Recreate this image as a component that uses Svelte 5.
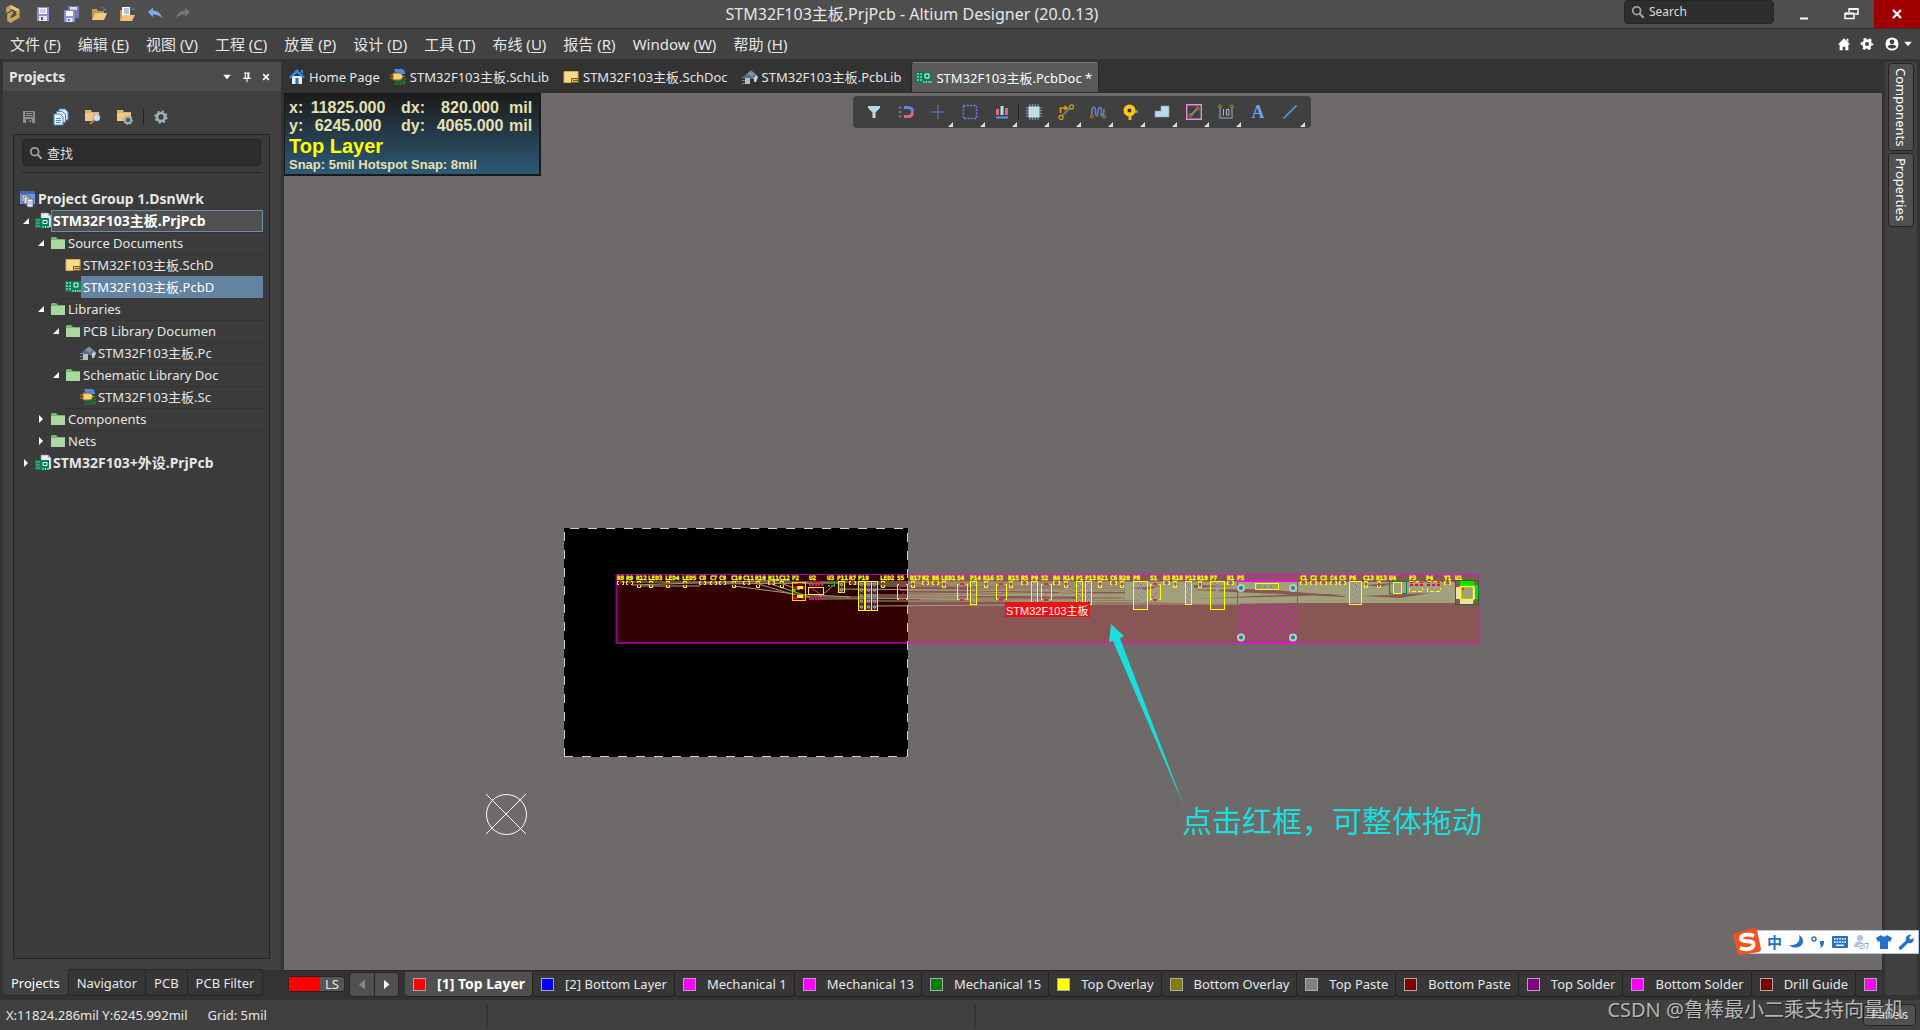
<script>
  const icons = {
    logo: '<path d="M1 2.500 5 0l8 4v7l-8 5-3-2V8l5-3v3L5 9.500V12l5-3V5.500L5 3v2L1 7z" fill="#c9a55c"/><path d="M5 0l8 4-3 1.500L5 3z" fill="#e2c685"/>',
    save: '<path d="M2 1h12v14H2z" fill="#8f8fd0"/><path d="M4 2h8v6H4z" fill="#fff"/><path d="M5 4h6M5 6h6" stroke="#9a9ac8"/><path d="M4 10h8v5H4z" fill="#e4e4f4"/><path d="M6 11h2v3H6z" fill="#55558c"/>',
    saveGray: '<path d="M2 2h12v12H2z" fill="#8d8d8d"/><path d="M4 3h8v5H4z" fill="#4b4b4b"/><path d="M5 4.500h6M5 6.500h6" stroke="#8d8d8d"/><path d="M5 10h6v4H5z" fill="#4b4b4b"/><path d="M9 11h1v2H9z" fill="#aaa"/>',
    saveAll: '<path d="M5 0h11v12H5z" fill="#7777bd"/><path d="M7 1h7v3H7z" fill="#ddd"/><path d="M1 4h11v12H1z" fill="#9696d6" stroke="#62629c" stroke-width=".5"/><path d="M3 5h7v5H3z" fill="#fff"/><path d="M3.500 12h6v4h-6z" fill="#e4e4f4"/><path d="M5 13h1.500v2H5z" fill="#55558c"/>',
    open: '<path d="M1 3h5l1 2h6v3H1z" fill="#c6984e"/><path d="M1 14V4l1 0v3l2 0z" fill="#c6984e"/><path d="M4 7h12l-3 7H1z" fill="#f2cb83"/><path d="M10 2c2-2 4 0 4 2m-2-1 2 1.500L15.500 3" stroke="#4a82b8" fill="none"/>',
    openDoc: '<path d="M1 4h3v10H1z" fill="#c6984e"/><path d="M3 1h8v9H3z" fill="#fff"/><path d="M5 3h5M5 5h5M5 7h5" stroke="#668cae"/><path d="M4 9h12l-3 6H1z" fill="#f2c272"/><path d="M12 2c2-1 3 0 3 2m-2-1 2 1.500L16 3" stroke="#4a82b8" fill="none"/>',
    undo: '<path d="M1 6 6 1.500V4.500c5 0 8 3 9 8-2-3-5-4-9-4v2.500z" fill="#7fa9ea"/>',
    redo: '<path d="M15 6 10 1.500V4.500C5 4.500 2 7.500 1 12.500c2-3 5-4 9-4v2.500z" fill="#757575"/>',
    home: '<path d="M3 7h10v8H3z" fill="#e8eef4"/><path d="M0 8.500 8 0l8 8.500-1.500 1L8 4 1.500 9.500z" fill="#2f8df0"/><path d="M12 1h2v4l-2-2z" fill="#2f8df0"/><path d="M6.500 9h3v6h-3z" fill="#2a6eb8"/>',
    schlib: '<path d="M4 0h7c3 0 4 2 4 5H6z" fill="#4a8cf0"/><path d="M8 10h6v4H5v-3z" fill="#146a2c"/><path d="M5 14v2m3-2v2m3-2v2m3-2v2M14 10h2m-2 3h2" stroke="#2a9a48"/><path d="M3 4h6c5 0 5 7 0 7H3z" fill="#f4d27a" stroke="#8c6414"/><path d="M0 6h3M0 9h3m9-1.500h3" stroke="#c08a20"/>',
    schdoc: '<path d="M1 2.500h14v11H1z" fill="#f6da8e" stroke="#d8ad50"/><path d="M8.500 9.500H15V13.500H8.500z" fill="#e5be66" stroke="#7a5a20"/><path d="M10 11.500h5" stroke="#7a5a20"/>',
    pcblib: '<path d="M2 7 9 1l6 5-3 4-4 0-3 1z" fill="#566c84"/><path d="M5 5 9 2l4 3-3 3z" fill="#7d90a4"/><path d="M3 9h5v6H3z" fill="#b3bdc7"/><path d="M0 8.500h4M0 11.500h3m-3 3h3" stroke="#7a828a" stroke-width="1.200"/><path d="M11 10l3-4 2 2-2 5h-2v-3z" fill="#c6ced6"/>',
    pcbdoc: '<path d="M0 2h16v11H0z" fill="#078058"/><path d="M1 4h2m-2 3h2m-2 3h2m1-6h2M4 7h2M4 10h2" stroke="#d8f4e8"/><path d="M9 4h4v4H9z" fill="none" stroke="#e8fff4"/><path d="M8 13v-2m2.500 2v-2m2.500 2v-2m2 2v-2" stroke="#c0f0d8"/>',
    project: '<path d="M6 0h7l3 3v11H6z" fill="#eaeaf6" stroke="#8888aa" stroke-width=".6"/><path d="M13 0v3h3" fill="#b2b2cc"/><path d="M0 5h14v10H0z" fill="#078058"/><path d="M1.500 7h4m-4 3h4m-4 3h4" stroke="#d8f4e8" stroke-dasharray="1 1"/><path d="M8 7.500h4v3H8z" fill="#075" stroke="#e8fff4"/><path d="M8 15v-2m2.500 2v-2m2.500 2v-2" stroke="#c0f0d8"/>',
    group: '<path d="M0 0h15v13H0z" fill="#7397d8"/><path d="M0 0h15v3H0z" fill="#3c68bc"/><path d="M2 4h6v7H2z" fill="#eef" stroke="#56658c"/><path d="M4 6h6v7H4z" fill="#eef" stroke="#56658c"/><path d="M7 8h6v8H7z" fill="#fff" stroke="#56658c"/><path d="M8 11h4m-4 2h4" stroke="#7d94bd"/>',
    folder: '<path d="M1 3l1-1h4l2 2h7v10H1z" fill="#7ab57a"/><path d="M1 5h14v9H1z" fill="#a9d99f"/>',
    docs: '<path d="M6 0h6l3 3v8H6z" fill="#d8ebff" stroke="#4a86c4"/><path d="M3.500 2.500h6l3 3v8h-9z" fill="#d8ebff" stroke="#4a86c4"/><path d="M1 5h6l3 3v8H1z" fill="#eef7ff" stroke="#4a86c4"/><path d="M3 9.500h5m-5 2h5m-5 2h5" stroke="#4a86c4"/>',
    folderFind: '<path d="M0 1h6l1 2h7v9H0z" fill="#dcb46c"/><path d="M0 4h14v8H0z" fill="#f0c981"/><circle cx="11.500" cy="8.500" r="3.500" fill="#c8e0ee" stroke="#96b0c0"/><path d="m9 11-4 4" stroke="#c77c30" stroke-width="2"/>',
    folderGear: '<path d="M0 1h6l1 2h7v9H0z" fill="#dcb46c"/><path d="M0 4h14v8H0z" fill="#f0c981"/><circle cx="11" cy="11" r="3.300" fill="#555" stroke="#a4b4bc" stroke-width="2"/><circle cx="11" cy="11" r="4.800" fill="none" stroke="#a4b4bc" stroke-dasharray="1.500 2.200"/>',
    gearBlue: '<circle cx="8" cy="8" r="4" fill="none" stroke="#9fb2bd" stroke-width="2.600"/><circle cx="8" cy="8" r="5.800" fill="none" stroke="#9fb2bd" stroke-width="1.600" stroke-dasharray="2.300 2.250"/>',
    search: '<circle cx="6.500" cy="6.500" r="4.500" fill="none" stroke="#a0a0a0" stroke-width="2"/><path d="m10 10 4.500 4.500" stroke="#a0a0a0" stroke-width="2.600"/>',
    menu: '<path d="M3 5h10l-5 6z" fill="#fff"/>',
    pin: '<path d="M4 2h8v1h-1v6h2v1.500H8.700V15H7.300v-4.500H3V9h2V3H4zM6.500 3.200V9h2V3.200z" fill="#fff" fill-rule="evenodd"/>',
    close: '<path d="m3.500 3.500 9 9m0-9-9 9" stroke="#fff" stroke-width="2.600"/>',
    min: '<path d="M4 11.500h8v2H4z" fill="#fff"/>',
    restore: '<path d="M6 6V3h9v5h-3M2 7.500h9v5H2z" fill="none" stroke="#fff" stroke-width="1.500"/><path d="M6 3h9M2 7.500h9" stroke="#fff" stroke-width="2"/>',
    house: '<path d="M8 1.500 15 8.500h-2V15h-3.500v-4h-3v4H3V8.500H1zM11 2h2v4l-2-2z" fill="#fff"/>',
    gear: '<circle cx="8" cy="8" r="3.900" fill="none" stroke="#fff" stroke-width="3.200"/><circle cx="8" cy="8" r="6.200" fill="none" stroke="#fff" stroke-width="2" stroke-dasharray="3.200 3.290" stroke-dashoffset="1.600"/>',
    user: '<circle cx="8" cy="8" r="7.500" fill="#fff"/><circle cx="8" cy="5.500" r="2.700" fill="#404040"/><path d="M3 11c1-3 9-3 10 0-2 3-8 3-10 0z" fill="#404040"/>',
    filter: '<path d="M2 2h12v2l-4.500 4.500V14h-3V8.500L2 4z" fill="#b7d8ea"/>',
    magnet: '<path d="M6 3.500h4q4.500 0 4.500 4.500" stroke="#6488dd" stroke-width="3" fill="none"/><path d="M14.500 8q0 4.500-4.500 4.500H6" stroke="#d56a76" stroke-width="3" fill="none"/><path d="M1 3.500h3M1 8h3m-3 4.500h3" stroke="#6f8799" stroke-width="2" stroke-dasharray="1.500 1"/>',
    cross: '<path d="M8 1v14M1 8h14" stroke="#587fd0"/>',
    select: '<path d="M1.500 1.500h13v13h-13z" fill="none" stroke="#6685e6" stroke-width="1.400" stroke-dasharray="2 1.300"/>',
    align: '<path d="M2 5h3v6H2zM11 4h3v7h-3z" fill="#d86d78"/><path d="M6.500 2h3v9h-3z" fill="#b8dced"/><path d="M2 12.500h12v2H2z" fill="#6292da"/>',
    chip: '<path d="M4 0v16M6.700 0v16M9.300 0v16M12 0v16M0 4h16M0 6.700h16M0 9.300h16M0 12h16" stroke="#7e93a5" stroke-width="1.200"/><path d="M2.500 2.500h11v11h-11z" fill="#c4dcea"/>',
    route: '<path d="M2.500 9V4h5" fill="none" stroke="#d69a12" stroke-width="1.700"/><path d="m6.500 1 4 3-4 3z" fill="#d69a12"/><path d="m4 12 8-8" stroke="#6b7784" stroke-width="2.200"/><circle cx="3" cy="13.500" r="2" fill="#3d3d3d" stroke="#d69a12" stroke-width="1.300"/><circle cx="13.500" cy="3" r="2" fill="#3d3d3d" stroke="#d69a12" stroke-width="1.300"/>',
    wave: '<path d="M2 11C1 3 4 2 5 4s0 8 1.500 8S8 9 8 7s2-5 3-3-.5 8 1 8 2-5 2-7" fill="none" stroke="#5c83ce" stroke-width="1.600"/><circle cx="1.800" cy="12.500" r="1.500" fill="#3d3d3d" stroke="#c98a20"/><circle cx="14.200" cy="12.500" r="1.500" fill="#3d3d3d" stroke="#c98a20"/>',
    pad: '<path d="M9 6h7v3H9z" fill="#59a83c"/><path d="M6.500 9h3v7h-3z" fill="#ffab3c"/><circle cx="7.500" cy="6.500" r="4" fill="#333" stroke="#fbc816" stroke-width="4"/>',
    poly: '<path d="M1 7h6V2h8v11H1z" fill="#b9dcec" stroke="#83a8bd" stroke-width=".6"/>',
    room: '<path d="M.7.700h14.600v14.600H.7z" fill="none" stroke="#e78cdc" stroke-width="1.400"/><path d="m5 11 6-6" stroke="#6d87a5" stroke-width="2"/><circle cx="4.500" cy="11.500" r="1.500" fill="#444" stroke="#d69a12"/><circle cx="11.500" cy="4.500" r="1.500" fill="#444" stroke="#d69a12"/>',
    dim: '<path d="M2 4v10h12V4" fill="none" stroke="#74899b" stroke-width="1.500"/><circle cx="2" cy="2.500" r="1.500" fill="#444" stroke="#c98a20"/><circle cx="14" cy="2.500" r="1.500" fill="#444" stroke="#c98a20"/><path d="M5.500 5v6.500M8.500 5.500h2.500v5.500H8.500z" fill="none" stroke="#a9b8c4"/>',
    text: '<text x="8" y="14" text-anchor="middle" font-family="Liberation Serif, serif" font-weight="700" font-size="18" fill="#6b9ff0">A</text>',
    line: '<path d="M1.500 14.500 14.500 1.500" stroke="#4d8ed6" stroke-width="1.800"/>',
    moon: '<path d="M11 1c2 6-2 11-10 10 6 5 14 2 14-4 0-3-2-5-4-6z" fill="#2272cb"/>',
    comma: '<circle cx="4" cy="5" r="2" fill="none" stroke="#2272cb" stroke-width="1.400"/><path d="M10 7h4c0 4-1 6-4 7 1-2 1-3 0-4z" fill="#2272cb"/>',
    keyboard: '<path d="M1 2h14q1 0 1 1v10q0 1-1 1H1q-1 0-1-1V3q0-1 1-1z" fill="#2272cb"/><path d="M2 5h12M2 8h12" stroke="#fff" stroke-width="1.500" stroke-dasharray="1.700 .9"/><path d="M4 11.300h8" stroke="#fff" stroke-width="1.500"/>',
    person: '<circle cx="6" cy="4" r="3" fill="#b5c2dc"/><path d="M0 13c0-7 10-7 11-3v4z" fill="#b5c2dc"/><path d="M6 9.500h3V12H6v2.500h3m2-5h3.500L12.500 15" fill="none" stroke="#fff" stroke-width="2.600"/><path d="M6 9.500h3V12H6v2.500h3m2-5h3.500L12.500 15" fill="none" stroke="#93a5c8"/>',
    shirt: '<path d="M5 1c1 2 5 2 6 0l5 3-2 4-2-1v8H4V7L2 8 0 4z" fill="#2272cb"/>',
    wrench: '<path d="M1 13 8 6.500C7 3 10 0 13.500 1L11 3.500l1.500 2L15.500 4C16.500 8 13 10 10 9l-6.500 6.500Q0 16 1 13z" fill="#2272cb"/>'
  };

  const menus = [
    ['文件', 'F'], ['编辑', 'E'], ['视图', 'V'], ['工程', 'C'], ['放置', 'P'], ['设计', 'D'],
    ['工具', 'T'], ['布线', 'U'], ['报告', 'R'], ['Window', 'W'], ['帮助', 'H']
  ];
  const quick = [['save', 'Save'], ['saveAll', 'Save all'], ['open', 'Open'], ['openDoc', 'Open document'], ['undo', 'Undo'], ['redo', 'Redo']];
  const docs = [
    ['home', 'Home Page'], ['schlib', 'STM32F103主板.SchLib'], ['schdoc', 'STM32F103主板.SchDoc'],
    ['pcblib', 'STM32F103主板.PcbLib'], ['pcbdoc', 'STM32F103主板.PcbDoc *']
  ];
  const tree = [
    { lv: 0, icon: 'group', text: 'Project Group 1.DsnWrk', bold: true },
    { lv: 1, icon: 'project', text: 'STM32F103主板.PrjPcb', bold: true, open: true, focus: true },
    { lv: 2, icon: 'folder', text: 'Source Documents', open: true },
    { lv: 3, icon: 'schdoc', text: 'STM32F103主板.SchD' },
    { lv: 3, icon: 'pcbdoc', text: 'STM32F103主板.PcbD', selected: true },
    { lv: 2, icon: 'folder', text: 'Libraries', open: true },
    { lv: 3, icon: 'folder', text: 'PCB Library Documen', open: true },
    { lv: 4, icon: 'pcblib', text: 'STM32F103主板.Pc' },
    { lv: 3, icon: 'folder', text: 'Schematic Library Doc', open: true },
    { lv: 4, icon: 'schlib', text: 'STM32F103主板.Sc' },
    { lv: 2, icon: 'folder', text: 'Components', open: false },
    { lv: 2, icon: 'folder', text: 'Nets', open: false },
    { lv: 1, icon: 'project', text: 'STM32F103+外设.PrjPcb', bold: true, open: false }
  ];
  const tools = [
    ['filter', 0], ['magnet', 0], ['cross', 1], ['select', 1], ['align', 1], ['chip', 1], ['route', 1],
    ['wave', 1], ['pad', 1], ['poly', 1], ['room', 1], ['dim', 1], ['text', 0], ['line', 1]
  ];
  const layers = [
    ['#ff0000', '[1] Top Layer'], ['#0000ff', '[2] Bottom Layer'], ['#ff00ff', 'Mechanical 1'], ['#ff00ff', 'Mechanical 13'],
    ['#008000', 'Mechanical 15'], ['#ffff00', 'Top Overlay'], ['#808000', 'Bottom Overlay'], ['#808080', 'Top Paste'],
    ['#800000', 'Bottom Paste'], ['#800080', 'Top Solder'], ['#ff00ff', 'Bottom Solder'], ['#800000', 'Drill Guide'], ['#ff00ff', '']
  ];
  const panels = ['Projects', 'Navigator', 'PCB', 'PCB Filter'];

  // Designators: x, name, outline (h = flat, v = upright, '' = drawn separately)
  const parts = [
    [617, 'R8', 'h'], [626, 'R9', 'h'], [636, 'R12', 'v'], [648, 'LED3', 'v'], [665, 'LED4', 'v'], [682, 'LED5', 'v'],
    [699, 'C8', 'h'], [710, 'C7', 'h'], [719, 'C9', 'h'], [731, 'C10', 'v'], [743, 'C11', 'h'], [755, 'R10', 'v'],
    [768, 'R11', 'h'], [779, 'C12', 'v'], [792, 'P2', ''], [809, 'U2', ''], [827, 'U3', ''], [837, 'P11', ''],
    [849, 'R7', 'h'], [858, 'P10', ''], [880, 'LED2', 'v'], [897, 'S5', ''], [910, 'R17', 'v'], [922, 'R2', 'h'],
    [932, 'R6', 'h'], [941, 'LED1', 'v'], [957, 'S4', ''], [970, 'P14', ''], [983, 'R16', 'v'], [996, 'S3', ''],
    [1008, 'R15', 'v'], [1021, 'R5', 'h'], [1031, 'P9', ''], [1041, 'S2', ''], [1053, 'R4', 'h'], [1063, 'R14', 'v'],
    [1076, 'P1', ''], [1085, 'P13', ''], [1097, 'R21', 'v'], [1110, 'C6', 'h'], [1119, 'R20', 'v'], [1133, 'P8', ''],
    [1150, 'S1', ''], [1163, 'R3', 'h'], [1172, 'R18', 'v'], [1185, 'P12', ''], [1197, 'R19', 'v'], [1210, 'P7', ''],
    [1227, 'R1', 'h'], [1237, 'P5', ''], [1300, 'C1', 'h'], [1310, 'C2', 'h'], [1320, 'C3', 'h'], [1330, 'C4', 'h'],
    [1339, 'C5', 'h'], [1349, 'P6', ''], [1363, 'C13', 'v'], [1376, 'R13', 'v'], [1389, 'U4', ''], [1409, 'P3', ''],
    [1426, 'P4', ''], [1444, 'Y1', 'h'], [1455, 'U1', '']
  ];
  // Pin headers: x, width, height, pins
  const headers = [
    [838, 6, 11, 2], [858, 6, 29, 5], [865, 6, 29, 5], [871, 6, 29, 5], [970, 6, 23, 4], [1031, 6, 23, 4],
    [1076, 6, 23, 4], [1085, 6, 23, 4], [1185, 6, 23, 4], [1133, 14, 28, 4], [1210, 14, 28, 4], [1349, 12, 23, 4]
  ];
  const switches = [897, 957, 996, 1041, 1150];
  const nets = [
    [620, 582, 840, 582], [632, 585, 790, 580], [640, 586, 700, 586], [700, 584, 840, 583], [734, 586, 795, 594],
    [755, 583, 795, 595], [768, 583, 810, 597], [780, 583, 800, 590], [795, 594, 850, 597], [820, 597, 835, 584],
    [838, 589, 960, 590], [800, 597, 960, 597], [820, 599, 1000, 598], [864, 595, 1140, 595], [864, 601, 1240, 601],
    [876, 606, 1010, 605], [840, 582, 1240, 582], [850, 584, 1240, 584], [880, 586, 1240, 586], [900, 590, 1240, 592],
    [908, 593, 1240, 597], [908, 596, 1240, 594], [920, 599, 1240, 603], [977, 588, 1240, 588], [977, 592, 1240, 599],
    [1006, 604, 1240, 604], [1040, 590, 1130, 598], [1090, 597, 1210, 588], [1050, 598, 1080, 584], [1190, 602, 1240, 590],
    [908, 583, 1240, 583], [950, 585, 1240, 585], [977, 589, 1240, 590], [1006, 602, 1240, 602], [1006, 599, 1240, 600],
    [1006, 594, 1240, 594], [1036, 591, 1240, 591], [1036, 596, 1240, 596], [1076, 587, 1240, 587], [1076, 598, 1240, 598]
  ];
</script>

{#snippet icon(name, cls)}
  <svg class={cls} viewBox="0 0 16 16" aria-hidden="true">{@html icons[name]}</svg>
{/snippet}

<div class="app">
  <header class="title">
    <div class="quick">
      {@render icon('logo', 'i18')}
      {#each quick as [name, label]}
        <button aria-label={label}>{@render icon(name, 'i16')}</button>
      {/each}
    </div>
    <h1>STM32F103主板.PrjPcb - Altium Designer (20.0.13)</h1>
    <div class="win">
      <label class="search top">{@render icon('search', 'i14')}<input type="text" placeholder="Search" aria-label="Search" /></label>
      <button aria-label="Minimize">{@render icon('min', 'i16')}</button>
      <button aria-label="Restore">{@render icon('restore', 'i16')}</button>
      <button class="quit" aria-label="Close">{@render icon('close', 'i14')}</button>
    </div>
  </header>

  <nav class="menu">
    {#each menus as [text, key]}
      <button>{text} (<u>{key}</u>)</button>
    {/each}
    <div class="account">
      <button aria-label="Home">{@render icon('house', 'i14')}</button>
      <button aria-label="Settings">{@render icon('gear', 'i14')}</button>
      <button class="who" aria-label="Account">{@render icon('user', 'i14')}{@render icon('menu', 'i12')}</button>
    </div>
  </nav>

  <main>
    <aside>
      <div class="panel">
        <div class="phead">
          <h2>Projects</h2>
          <button aria-label="Panel menu">{@render icon('menu', 'i12')}</button>
          <button aria-label="Pin">{@render icon('pin', 'i12')}</button>
          <button aria-label="Close panel">{@render icon('close', 'i10')}</button>
        </div>
        <div class="ptools">
          <button aria-label="Save">{@render icon('saveGray', 'i16')}</button>
          <button aria-label="Compile">{@render icon('docs', 'i16')}</button>
          <button aria-label="Find in project">{@render icon('folderFind', 'i16')}</button>
          <button aria-label="Project options">{@render icon('folderGear', 'i16')}</button>
          <i></i>
          <button aria-label="Settings">{@render icon('gearBlue', 'i16')}</button>
        </div>
        <div class="box">
          <label class="search">{@render icon('search', 'i14')}<input type="text" placeholder="查找" aria-label="查找" /></label>
          <ul>
            {#each tree as n}
              <li class="lv{n.lv}" class:bold={n.bold} class:focus={n.focus} class:selected={n.selected}>
                <span class="arrow" class:open={n.open === true} class:shut={n.open === false}></span>
                {@render icon(n.icon, 'i16')}
                <span class="label">{n.text}</span>
              </li>
            {/each}
          </ul>
        </div>
      </div>
      <div class="ptabs">
        {#each panels as p, i}
          <button class:on={i === 0}>{p}</button>
        {/each}
      </div>
    </aside>

    <section>
      <div class="docs">
        {#each docs as [name, text], i}
          <button class:on={i === 4}>{@render icon(name, 'i16')}<span>{text}</span></button>
        {/each}
      </div>

      <div class="canvas">
        <svg class="board" viewBox="284 93 1598 877" preserveAspectRatio="xMinYMin meet" role="img" aria-label="PCB">
          <defs>
            <pattern id="hatch" width="8" height="8" patternUnits="userSpaceOnUse">
              <path d="M-1-1 9 9M-1 7 1 9M7-1 9 1" stroke="#f0f" stroke-width="1" />
            </pattern>
          </defs>
          <rect x="564" y="528" width="344" height="229" fill="#000" />
          <rect x="616" y="574" width="292" height="70" fill="#330000" />
          <rect x="908" y="574" width="572" height="70" fill="#8a5555" />
          <rect x="1237" y="590" width="60" height="53" fill="url(#hatch)" />
          <g stroke="#a0a07a" stroke-width="1" fill="none">
            {#each nets as [a, b, c, d]}
              <path d="M{a} {b}L{c} {d}" />
            {/each}
          </g>
          <path d="M1125 582H1457V603L1290 603 1200 604 1125 600Z" fill="#a0a07a" />
          <path d="M1190 590 1260 589 1345 596 1345 597ZM1192 599 1300 594 1345 594 1300 596ZM1365 585 1395 583 1380 587ZM1130 588 1160 586 1145 590ZM1362 596 1430 593 1400 598ZM1194 585 1235 586 1194 588Z" fill="#8a5555" />
          <path d="M616.500 574V643H908" fill="none" stroke="#900090" stroke-width="2" />
          <path d="M616 574.500H908" stroke="#b000b0" />
          <path d="M908 574.500H1479.500V643.500H908" fill="none" stroke="#c52bb8" stroke-width="1.500" />
          <path d="M1237.500 580V643.500H1297.500V580" fill="none" stroke="#f0f" />
          <path d="M1237 580.500h61" stroke="#f0f" stroke-width="2" />
          <rect x="1255.500" y="583.500" width="23" height="6" fill="#a0a07a" stroke="#ff0" />
          <path d="M1258 586.500h18" stroke="#599" stroke-width="2" stroke-dasharray="2 4" />
          <g fill="#009090" stroke="#c4c4c4" stroke-width="2">
            <circle cx="1241" cy="588" r="3" /><circle cx="1293" cy="588" r="3" />
            <circle cx="1241" cy="637.500" r="3" /><circle cx="1293" cy="637.500" r="3" />
          </g>
          <g class="refs">
            {#each parts as [x, name, kind]}
              <text {x} y="580">{name}</text>
              {#if kind === 'h'}
                <path d="M{x + 2} 581.500h-1.500v3h1.500m3-3h1.500v3h-1.500" fill="none" stroke="#ff0" />
                <path d="M{x + 2} 583h3" stroke="#d0a" />
              {:else if kind === 'v'}
                <path d="M{x + 1.500} 583v-1.500h3v1.500m0 2v2.500h-3v-2.500" fill="none" stroke="#ff0" />
                <path d="M{x + 2} 584h2" stroke="#d0a" />
              {/if}
            {/each}
          </g>
          {#each headers as [x, w, h, n]}
            <rect x={x + 0.5} y="581.5" width={w} height={h} fill="#a0a07a" fill-opacity=".25" stroke="#ff0" />
            {#each Array(n) as _, k}
              <path d="M{x + w / 2 - 2} {583 + k * 5.6}l4 4" stroke="#f0f" stroke-width=".7" />
              <circle cx={x + w / 2 + 0.5} cy={584.5 + k * 5.6} r="1.2" fill="#377" stroke="#b8c8c8" stroke-width=".8" />
            {/each}
          {/each}
          {#each switches as x}
            <path d="M{x + 2} 584.500h-1.500v15h1.500m7-15h1.500v15h-1.500" fill="none" stroke="#ff0" />
            <path d="M{x + 2} 589l6-4m-6 13 7-8" stroke="#f0f" stroke-width=".8" stroke-dasharray="3 2" />
            <path d="M{x + 3} 584h4m-4 16h4" stroke="#d02020" stroke-width="1.500" />
          {/each}
          <path d="M793 588h14m-14 10h14m-9-15h4" stroke="#e00" stroke-width="3" stroke-dasharray="5 3" />
          <path d="M797 587.500h6m-6 9h6" stroke="#ff0" stroke-width="3" />
          <path d="M794 589v3" stroke="#0f0" stroke-width="3" />
          <rect x="792.500" y="582.500" width="13" height="18" fill="none" stroke="#ffd800" />
          <path d="M809 585h14m-14 14h14" stroke="#e0a" stroke-width="2" stroke-dasharray="2 1" />
          <path d="M812 582h9" stroke="#e00" stroke-width="1.500" />
          <path d="m811 588 12 8" stroke="#f0f" />
          <rect x="808.500" y="587.500" width="15" height="7" fill="none" stroke="#ff0" />
          <path d="M828 583h7m-7 3h7" stroke="#19a030" stroke-width="2" stroke-dasharray="2 1" />
          <rect x="1389.500" y="581.500" width="17" height="12" fill="none" stroke="#084" />
          <rect x="1393.500" y="582.500" width="8" height="11" fill="none" stroke="#ff0" />
          <path d="M1410 585h13m4 0h13M1410 582h4m6 0h3m4 0h4m6 0h3" stroke="#e01040" stroke-width="2" stroke-dasharray="3 2" />
          <path d="M1409.500 588v3.500h13V588m5 0v3.500h13V588m-31-6.500h13m5 0h13" stroke="#ff0" fill="none" stroke-dasharray="4 2" />
          <rect x="1455.500" y="580.500" width="23" height="24" fill="#8a5555" stroke="#087a20" />
          <path d="M1460 581h14v4h4v14h-4v4h-14z" fill="#00e400" />
          <rect x="1456" y="587" width="19" height="12" fill="#e8e0b8" />
          <rect x="1460" y="587" width="13" height="17" fill="#e8e0b8" />
          <rect x="1460.500" y="586.500" width="13" height="13" fill="#a0a07a" stroke="#ff0" stroke-width="1.500" />
          <circle cx="1463" cy="589" r="1" fill="#f00" />
          <path d="M564.500 757V528.500H907.500V756.500H564.500" fill="none" stroke="#d0d0d0" stroke-dasharray="9 9" />
          <rect x="1005" y="602" width="85" height="15" fill="#ee1111" />
          <text class="tag" x="1006" y="615">STM32F103主板</text>
          <g fill="none" stroke="#fff">
            <circle cx="506.500" cy="814.500" r="20" />
            <path d="m486 794 40 40m0-40-40 40" />
          </g>
          <path d="M1111 624l13 12-4 2.500 64 167.500-71-165-4 1z" fill="#18dede" />
          <text class="note" x="1182" y="832">点击红框，可整体拖动</text>
        </svg>

        <div class="hud">
          <div class="coords">
            <span>x:</span><b>11825.000</b><span>dx:</span><b>820.000</b><span>mil</span>
            <span>y:</span><b>6245.000</b><span>dy:</span><b>4065.000</b><span>mil</span>
          </div>
          <strong>Top Layer</strong>
          <small>Snap: 5mil Hotspot Snap: 8mil</small>
        </div>

        <div class="active-bar">
          {#each tools as [name, more], i}
            <button class:more={more === 1} class:split={i === 5} aria-label={name}>{@render icon(name, 'i16')}</button>
          {/each}
        </div>
      </div>

      <div class="layers">
        <button class="ls"><i></i><span>LS</span></button>
        <div class="arrows"><button class="prev" aria-label="Previous layer"><i></i></button><button class="next" aria-label="Next layer"><i></i></button></div>
        {#each layers as [color, text], i}
          <button class="layer" class:on={i === 0} aria-label={text || 'More layers'}><i style="background:{color}"></i><span>{text}</span></button>
        {/each}
      </div>
    </section>

    <div class="dock">
      <div class="dock-in">
        <button>Components</button>
        <button>Properties</button>
      </div>
    </div>
  </main>

  <footer>
    <div class="cell"><span>X:11824.286mil Y:6245.992mil</span><span>Grid: 5mil</span></div>
    <div class="cell"></div>
    <div class="cell last"></div>
    <button>Panels</button>
  </footer>

  <div class="ime">
    <svg class="sogou" viewBox="0 0 28 28" aria-hidden="true">
      <path d="M2 5 21 0q2 0 3 2l4 19q0 2-2 3L8 27q-2 0-3-2L0 8q0-2 2-3z" fill="#f4511e" />
      <path d="M21 8C15 5 7 7 8 11s13 0 12.500 5.500S12 22 7 20" fill="none" stroke="#fff" stroke-width="4" />
    </svg>
    <span>中</span>
    {#each ['moon', 'comma', 'keyboard', 'person', 'shirt', 'wrench'] as n}
      {@render icon(n, 'i16')}
    {/each}
  </div>
  <div class="mark">CSDN @鲁棒最小二乘支持向量机</div>
</div>

<style>
  :global(body) { margin: 0; background: #404040; }
  * { box-sizing: border-box; }
  .app {
    position: relative; display: flex; flex-direction: column; min-height: 100vh; overflow: hidden;
    font: 13px/20px "Noto Sans", "Noto Sans CJK SC", sans-serif; color: #e6e6e6;
  }
  button { font: inherit; color: inherit; background: none; border: 0; padding: 0; display: flex; align-items: center; white-space: nowrap; }
  h1, h2, ul { margin: 0; padding: 0; font-weight: 400; }
  svg { display: block; flex: none; overflow: visible; }
  .i10 { width: 10px; height: 10px; }
  .i12 { width: 12px; height: 12px; }
  .i14 { width: 14px; height: 14px; }
  .i16 { width: 16px; height: 16px; }
  .i18 { width: 18px; height: 18px; }

  .title { display: grid; grid-template-columns: 1fr auto 1fr; height: 29px; background: #4e4e4e; border-bottom: 1px solid #303030; }
  .quick { display: flex; align-items: center; gap: 12px; padding-left: 5px; }
  .title h1 { font-size: 16px; line-height: 28px; padding-right: 96px; }
  .win { display: flex; justify-content: flex-end; }
  .win button { width: 47px; height: 28px; justify-content: center; }
  .win .quit { background: #a00000; width: 46px; }
  .search { display: flex; align-items: center; gap: 4px; padding: 0 6px; height: 27px; background: #2d2d2d; border: 1px solid #242424; border-radius: 4px; }
  .search input { flex: 1; min-width: 0; background: none; border: 0; outline: 0; padding: 0; font: inherit; color: #e6e6e6; }
  .search input::placeholder { color: #dcdcdc; opacity: 1; }
  .search.top { width: 150px; height: 24px; margin-right: 6px; font-size: 12px; }

  .menu { display: flex; align-items: center; height: 30px; padding-left: 10px; gap: 17px; background: #424242; font-size: 15px; }
  u { text-underline-offset: 2px; }
  .account { margin-left: auto; display: flex; gap: 9px; padding-right: 6px; }
  .who { gap: 3px; margin-left: 2px; }

  main { flex: 1; display: flex; background: #333; min-height: 0; }
  aside { width: 284px; flex: none; display: flex; flex-direction: column; padding: 3px 3px 4px; }
  .panel { flex: 1; display: flex; flex-direction: column; background: #404040; padding-bottom: 11px; }
  .phead { display: flex; align-items: center; gap: 8px; height: 29px; padding: 0 10px 0 6px; background: #4b4b4b; }
  h2 { flex: 1; font-size: 14px; font-weight: 700; }
  .ptools { display: flex; align-items: center; gap: 16px; height: 43px; padding: 9px 0 0 18px; }
  .ptools i { width: 1px; height: 16px; background: #222; margin: 0 -7px 0 -6px; }
  .box { flex: 1; margin: 0 11px 0 10px; padding: 4px 5px 0 8px; border: 1px solid #262626; background: #3b3b3b; }
  .box .search { margin-right: 3px; }
  ul { list-style: none; border-top: 1px solid #262626; margin: 6px 3px 0 0; padding-top: 15px; }
  li { display: flex; align-items: center; height: 22px; margin-left: -5px; }
  li.lv0 .arrow { display: none; }
  li.lv0 { padding-left: 3px; }
  li.lv1 { padding-left: 4px; }
  li.lv2 { padding-left: 19px; }
  li.lv3 { padding-left: 34px; }
  li.lv4 { padding-left: 49px; }
  .arrow { width: 14px; height: 8px; flex: none; }
  .open::before, .shut::before { content: ""; display: block; margin-left: 3px; background: #fff; }
  .open::before { width: 6px; height: 6px; margin-top: 1px; margin-left: 2px; clip-path: polygon(100% 0, 100% 100%, 0 100%); }
  .shut::before { width: 4px; height: 8px; clip-path: polygon(0 0, 100% 50%, 0 100%); }
  .label { flex: 1; min-width: 0; height: 22px; line-height: 20px; padding-left: 2px; border-top: 1px solid #333; margin-right: -2px; white-space: nowrap; }
  .bold { font-size: 14px; font-weight: 700; }
  .lv0 .label, .lv1 .label { border-color: transparent; }
  .focus .label { background: #505050; border: 1px solid #6b8db0; color: #fff; padding-left: 1px; }
  .selected .label { background: #6383a3; border-color: #6383a3; color: #fff; }
  .ptabs { display: flex; height: 27px; margin-top: -1px; }
  .ptabs button { padding: 0 8px; border: 1px solid #262626; border-left-width: 0; background: #363636; border-radius: 0 0 4px 4px; }
  .ptabs .on { background: #404040; border-top-color: #404040; color: #fff; }

  section { flex: 1; min-width: 0; display: flex; flex-direction: column; }
  .docs { display: flex; height: 34px; padding: 3px 0 1px 1px; }
  .docs button { gap: 4px; padding: 0 10px 0 4px; }
  .docs button:first-child { padding-right: 6px; }
  .docs .on { padding-right: 6px; background: #5a5a5a; border: 1px solid #262626; border-top-color: #777; border-bottom: 0; border-radius: 4px 4px 0 0; color: #fff; }
  .canvas { position: relative; flex: 1; background: #6e6a69; overflow: hidden; display: grid; min-height: 0; }
  .board { width: 100%; height: 100%; }
  .refs text { font: 700 6px "DejaVu Sans Mono", monospace; fill: #ffff00; stroke: #ffff00; stroke-width: .3; }
  .tag { font: 11px "Liberation Sans", "Noto Sans CJK SC", sans-serif; fill: #fff; }
  .note { font: 30px "Noto Sans CJK SC", sans-serif; fill: #18dede; }
  .hud {
    position: absolute; left: 0; top: 0; width: 257px; height: 83px; padding: 4px 4px 0; border: solid #1a1a1a; border-width: 2px 2px 2px 1px;
    background: linear-gradient(#1c1c1c, #2c5a76); font-family: "Liberation Sans", sans-serif; font-weight: 700; color: #e6e0b0;
  }
  .coords { display: grid; grid-template-columns: 20px 78px 44px 78px 1fr; font-size: 16px; line-height: 18px; }
  .coords b { text-align: center; }
  .coords span:nth-child(5n + 3) { padding-left: 14px; }
  .hud strong { display: block; font-size: 20px; line-height: 22px; color: #ffff00; }
  .hud small { display: block; font-size: 13px; line-height: 16px; }
  .active-bar { position: absolute; left: 569px; top: 3px; display: flex; height: 32px; padding: 0 5px; background: #404040; border-radius: 4px; }
  .active-bar button { position: relative; width: 32px; justify-content: center; }
  .more::after { content: ""; position: absolute; right: 1px; bottom: 1px; width: 5px; height: 5px; background: #ddd; clip-path: polygon(100% 0, 100% 100%, 0 100%); }
  .split::before { content: ""; position: absolute; left: 0; top: 8px; width: 1px; height: 16px; background: #222; }

  .layers { display: flex; height: 30px; padding: 1px 0 4px 4px; overflow: hidden; border-top: 1px solid #262626; }
  .layers button { flex: none; }
  .ls { height: 16px; margin: 4px 4px 0 0; border: 1px solid #262626; border-radius: 3px; background: #555; }
  .ls i { width: 31px; height: 14px; background: #f00; }
  .ls span { width: 24px; text-align: center; line-height: 14px; }
  .arrows { display: flex; height: 25px; margin-right: 6px; border: 1px solid #262626; border-radius: 4px; background: #505050; }
  .arrows button { width: 24px; justify-content: center; }
  .arrows .next { border-left: 1px solid #262626; }
  .arrows i { width: 6px; height: 10px; background: #fff; clip-path: polygon(0 0, 100% 50%, 0 100%); }
  .arrows .prev i { background: #888; clip-path: polygon(100% 0, 100% 100%, 0 50%); }
  .layer { height: 25px; gap: 11px; padding: 0 7px 0 8px; border-right: 1px solid #222; border-bottom: 1px solid #222; border-radius: 0 0 4px 4px; background: #373737; }
  .layer i { width: 13px; height: 13px; border: 1px solid #aaa; }
  .layer.on { background: #505050; font-size: 14px; font-weight: 700; color: #fff; }

  .dock { width: 38px; flex: none; padding: 3px 3px 5px; background: #333; }
  .dock-in { height: 100%; padding: 1px 3px; background: #404040; display: flex; flex-direction: column; gap: 2px; }
  .dock button { writing-mode: vertical-rl; padding: 4px 2px; width: 26px; justify-content: center; border: 1px solid #222; border-radius: 4px; background: #505050; color: #fff; }

  footer { display: flex; align-items: center; height: 30px; background: #404040; }
  .cell { width: 488px; height: 24px; flex: none; padding: 0 6px; border-right: 2px solid #363636; display: flex; align-items: center; gap: 20px; }
  .last { flex: 1; border: 0; }
  footer button { height: 22px; margin-right: 4px; padding: 0 7px; border: 1px solid #262626; border-radius: 4px; background: #505050; font-size: 12px; }

  .ime { position: absolute; right: 1px; bottom: 76px; display: flex; align-items: center; gap: 6px; height: 24px; padding-right: 4px; background: #fff; border: 1px solid #b8c8e0; }
  .sogou { width: 28px; height: 28px; margin-left: -16px; }
  .ime span { color: #2272cb; font-weight: 700; font-size: 15px; }
  .mark { position: absolute; right: 16px; bottom: 5px; font-size: 20px; line-height: 30px; color: rgba(225, 225, 225, .75); text-shadow: 1px 1px 1px rgba(0, 0, 0, .5); pointer-events: none; }
</style>
